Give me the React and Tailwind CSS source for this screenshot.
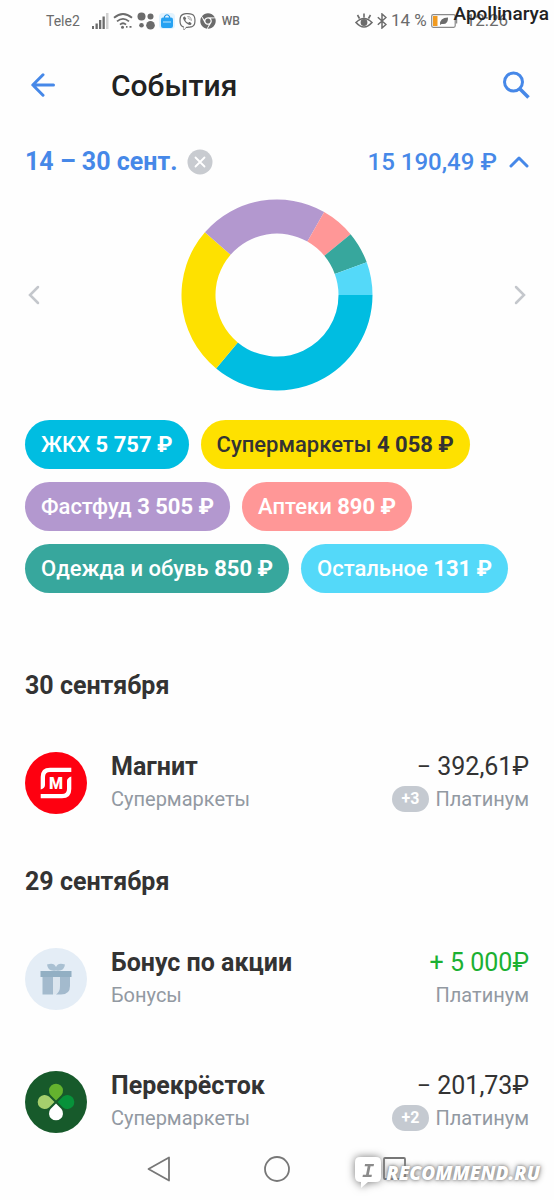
import { FaViber, FaChrome } from "react-icons/fa";

const categories = [
  { name: "ЖКХ", sum: "5 757 ₽", chip: "bg-[#00bde1] text-white", color: "#00bde1", from: 0, to: 129.6 },
  { name: "Супермаркеты", sum: "4 058 ₽", chip: "bg-[#fee100] text-[#333333]", color: "#fee100", from: 129.6, to: 221 },
  { name: "Фастфуд", sum: "3 505 ₽", chip: "bg-[#b398cf] text-white", color: "#b398cf", from: 221, to: 299.6 },
  { name: "Аптеки", sum: "890 ₽", chip: "bg-[#ff9797] text-white", color: "#ff9797", from: 299.6, to: 320.4 },
  { name: "Одежда и обувь", sum: "850 ₽", chip: "bg-[#37a79d] text-white", color: "#37a79d", from: 320.4, to: 340 },
  { name: "Остальное", sum: "131 ₽", chip: "bg-[#54d9f9] text-white", color: "#54d9f9", from: 340, to: 360 },
];

const days = [
  {
    date: "30 сентября",
    items: [
      { title: "Магнит", category: "Супермаркеты", amount: "− 392,61", account: "Платинум", bonus: "+3", Logo: MagnitLogo },
    ],
  },
  {
    date: "29 сентября",
    items: [
      { title: "Бонус по акции", category: "Бонусы", amount: "+ 5 000", account: "Платинум", income: true, Logo: GiftLogo },
      { title: "Перекрёсток", category: "Супермаркеты", amount: "− 201,73", account: "Платинум", bonus: "+2", Logo: CloverLogo },
    ],
  },
];

function MagnitLogo() {
  return (
    <svg viewBox="0 0 62 62" className="size-[62px] shrink-0" aria-hidden="true">
      <circle cx="31" cy="31" r="31" fill="#fe0010" />
      <path d="M46.300 15.700V20H25Q20 20 20 25V33Q20 36 15.700 37.500V25Q15.700 15.700 25 15.700Z" fill="#fff" />
      <path d="M15.700 46.300V42H37Q42 42 42 37V29Q42 26 46.300 24.500V37Q46.300 46.300 37 46.300Z" fill="#fff" />
      <text x="31" y="36.500" textAnchor="middle" fontSize="16" fontWeight="900" fill="#fff" fontFamily="Roboto, sans-serif">
        М
      </text>
    </svg>
  );
}

function GiftLogo() {
  return (
    <svg viewBox="0 0 62 62" className="size-[62px] shrink-0" aria-hidden="true">
      <circle cx="31" cy="31" r="31" fill="#e4edf6" />
      <path d="M17.500 29H28V46.500H17.500Z" fill="#a3bacd" />
      <path d="M28 29H35V39Q35 46.500 28 46.500Z" fill="#dbe5ee" />
      <path d="M35 29H45V38Q45 46.500 36 46.500H31Q35 44 35 38Z" fill="#a3bacd" />
      <path d="M31 22.500Q23 24 22 16.500Q29 14 31 19Q33 14 40 16.500Q39 24 31 22.500Z" fill="#a9c0d2" />
      <rect x="15.500" y="23" width="31" height="6" fill="#92afc3" />
    </svg>
  );
}

function CloverLogo() {
  const petal = "M31 29.500L25.500 24A7 7 0 1 1 36.500 24Z";
  return (
    <svg viewBox="0 0 62 62" className="size-[62px] shrink-0" aria-hidden="true">
      <circle cx="31" cy="31" r="31" fill="#175a2b" />
      <path d={petal} fill="#64b32e" />
      <path d={petal} fill="#07923a" transform="rotate(90 31 31)" />
      <path d={petal} fill="#fff" transform="rotate(180 31 31)" />
      <path d={petal} fill="#a5cf6d" transform="rotate(270 31 31)" />
    </svg>
  );
}

function slicePath({ from, to }) {
  const point = (r, deg) => {
    const a = (deg * Math.PI) / 180;
    return `${96 + r * Math.cos(a)} ${96 + r * Math.sin(a)}`;
  };
  const large = to - from > 180 ? 1 : 0;
  return `M${point(95.5, from)}A95.5 95.5 0 ${large} 1 ${point(95.5, to)}L${point(61.5, to)}A61.5 61.5 0 ${large} 0 ${point(61.5, from)}Z`;
}

function StatusBar() {
  return (
    <div className="relative flex h-[42px] items-center justify-between px-[46px] text-[#6b6b6b]">
      <div className="flex items-center gap-1">
        <span className="mr-2 text-sm">Tele2</span>
        <svg viewBox="0 0 17 16" className="h-4 w-[17px]" fill="currentColor" aria-hidden="true">
          <rect y="13" width="2" height="3" />
          <rect x="3.500" y="10.500" width="2.300" height="5.500" />
          <rect x="7" y="7" width="2.300" height="9" />
          <rect x="10.500" y="3.500" width="2.300" height="12.500" />
          <rect x="14" y="0" width="2.500" height="16" opacity=".3" />
        </svg>
        <svg viewBox="0 0 20 16" className="h-4 w-5" fill="none" stroke="currentColor" strokeWidth="1.800" aria-hidden="true">
          <path d="M1 4.800Q10-2.800 19 4.800M4 8.400Q10 3.400 16 8.400M7 11.600Q10 9 13 11.600" />
          <circle cx="9.500" cy="14.200" r="1.500" fill="currentColor" stroke="none" />
          <path d="M13 13.800h1.500M16.500 13.800h2" />
        </svg>
        <svg viewBox="0 0 18 18" className="size-[18px]" fill="currentColor" aria-hidden="true">
          <circle cx="4.500" cy="4.500" r="4" />
          <circle cx="13.500" cy="4.500" r="3" />
          <circle cx="4.500" cy="13.200" r="2.300" />
          <circle cx="13.500" cy="13.200" r="4.300" />
        </svg>
        <svg viewBox="0 0 16 16" className="size-4" aria-hidden="true">
          <rect width="16" height="16" rx="4" fill="#e2f3fe" />
          <path d="M5.500 5V3.500Q8 0 10.500 3.500V5" fill="none" stroke="#2196e8" strokeWidth="1.200" />
          <rect x="2" y="4.500" width="12" height="10.500" rx="2" fill="#27a2f2" />
          <path d="M4 9h8" stroke="#a8dafb" strokeWidth="1.200" />
        </svg>
        <FaViber className="size-[17px]" />
        <FaChrome className="size-4" />
        <span className="ml-0.5 text-xs font-medium">WB</span>
      </div>
      <div className="flex items-center gap-1 text-[17px]">
        <svg viewBox="0 0 18 16" className="h-4 w-[18px]" fill="none" stroke="currentColor" strokeWidth="1.600" aria-hidden="true">
          <path d="M1 9.500Q9 1.500 17 9.500Q9 18.500 1 9.500ZM9 4.500V.5M4.500 5.500L2.500 2M13.500 5.500L15.500 2" />
          <circle cx="9" cy="9.500" r="2.600" fill="currentColor" />
        </svg>
        <svg viewBox="0 0 10 16" className="h-4 w-[10px]" fill="none" stroke="currentColor" strokeWidth="1.500" aria-hidden="true">
          <path d="M.8 4.200L9 11.500L5 15V1L9 4.500L.8 11.800" />
        </svg>
        <span className="whitespace-nowrap">14 %</span>
        <svg viewBox="0 0 27 14" className="h-[14px] w-[27px]" aria-hidden="true">
          <rect x=".7" y=".7" width="23.500" height="12.600" rx="1.500" fill="none" stroke="#8a8a8a" strokeWidth="1.200" />
          <path d="M25.500 4.500v5" stroke="#8a8a8a" strokeWidth="1.500" />
          <rect x="2" y="2" width="4.500" height="10" fill="#f19a1f" />
          <path d="M9 11Q8.500 3.500 17 3.500Q17.500 11 10.500 10Z" fill="#6b6b6b" />
        </svg>
        <span className="ml-1">12:26</span>
      </div>
      <span className="absolute top-0 right-[5px] text-[19px]/7 font-medium text-[#222222]">Apollinarya</span>
    </div>
  );
}

function Operation({ item }) {
  const { title, category, amount, account, bonus, income, Logo } = item;
  return (
    <li className="flex items-center gap-6">
      <Logo />
      <div className="min-w-0 flex-1">
        <div className="text-[25px]/8 font-bold">{title}</div>
        <div className="text-xl/8 text-[#9299a2]">{category}</div>
      </div>
      <div className="text-right">
        <div className={income ? "text-[25px]/8 text-[#1bb032]" : "text-[25px]/8"}>{amount}₽</div>
        <div className="flex items-center justify-end gap-1.5 text-xl/8 text-[#9299a2]">
          {bonus && (
            <span className="rounded-full bg-[#c5cad1] px-[10px] text-base/[26px] font-bold text-white">{bonus}</span>
          )}
          {account}
        </div>
      </div>
    </li>
  );
}

function Watermark() {
  return (
    <div className="absolute right-[14px] bottom-2.5 flex items-center gap-1">
      <svg viewBox="0 0 28 34" className="h-[34px] w-7 drop-shadow-[0_0_4px_#777777]" aria-hidden="true">
        <path d="M6 1H22Q27 1 27 6V21Q27 26 22 26H14L7 32V26Q1 26 1 21V6Q1 1 6 1Z" fill="#fff" />
        <text x="14" y="21" textAnchor="middle" fontSize="20" fontWeight="700" fontStyle="italic" fill="#8b8b8b" fontFamily="Liberation Mono, monospace">
          I
        </text>
      </svg>
      <span className="font-['Open_Sans',sans-serif] text-[19px]/6 font-extrabold text-white italic [text-shadow:0_0_3px_#777777,0_0_6px_#888888]">
        RECOMMEND.RU
      </span>
    </div>
  );
}

export default function App() {
  return (
    <div className="flex min-h-screen flex-col bg-[#fefefe] font-[Roboto,sans-serif] text-[#333333]">
      <StatusBar />

      <header className="flex h-[86px] items-center px-6 text-[#4688e8]">
        <button type="button" aria-label="Назад" className="w-[87px] pl-[7px]">
          <svg viewBox="0 0 24 24" className="size-6" fill="none" stroke="currentColor" strokeWidth="3" strokeLinecap="round" strokeLinejoin="round">
            <path d="M22.500 12H2M12 1.800L1.800 12L12 22.200" />
          </svg>
        </button>
        <h1 className="flex-1 text-[30px] font-medium text-[#222222]">События</h1>
        <button type="button" aria-label="Поиск">
          <svg viewBox="0 0 28 28" className="size-7" fill="none" stroke="currentColor" strokeWidth="3">
            <circle cx="11.500" cy="11" r="9" />
            <path d="M17.500 17.500L26.500 26.500" strokeWidth="3.500" />
          </svg>
        </button>
      </header>

      <main className="px-[25px]">
        <div className="flex h-[68px] items-center justify-between text-[#4688e8]">
          <div className="flex items-center gap-[10px]">
            <button type="button" className="text-[25px] font-bold">14 – 30 сент.</button>
            <button type="button" aria-label="Сбросить период">
              <svg viewBox="0 0 26 26" className="size-[26px]">
                <circle cx="13" cy="13" r="12.500" fill="#c8cbd0" />
                <path d="M8.500 8.500L17.500 17.500M17.500 8.500L8.500 17.500" stroke="#fff" strokeWidth="1.800" strokeLinecap="round" />
              </svg>
            </button>
          </div>
          <button type="button" className="flex items-center gap-3 text-2xl font-medium">
            <span>15 190,49&#8197;₽</span>
            <svg viewBox="0 0 20 12" className="h-3 w-5" fill="none" stroke="currentColor" strokeWidth="3" strokeLinecap="round" strokeLinejoin="round" aria-hidden="true">
              <path d="M2 10L10 2L18 10" />
            </svg>
          </button>
        </div>

        <section className="flex h-[198px] items-center justify-between text-[#c4c7cc]">
          <button type="button" aria-label="Предыдущий период" className="px-[3px]">
            <svg viewBox="0 0 12 20" className="h-5 w-3" fill="none" stroke="currentColor" strokeWidth="2.500" strokeLinecap="round">
              <path d="M10 2L2 10L10 18" />
            </svg>
          </button>
          <svg viewBox="0 0 192 192" className="size-48" role="img" aria-label="Расходы по категориям">
            {categories.map((c) => (
              <path key={c.name} d={slicePath(c)} fill={c.color} />
            ))}
          </svg>
          <button type="button" aria-label="Следующий период" className="px-[3px]">
            <svg viewBox="0 0 12 20" className="h-5 w-3" fill="none" stroke="currentColor" strokeWidth="2.500" strokeLinecap="round">
              <path d="M2 2L10 10L2 18" />
            </svg>
          </button>
        </section>

        <div className="mt-[26px] flex flex-wrap gap-x-3 gap-y-[13px]">
          {categories.map((c) => (
            <button key={c.name} type="button" className={`rounded-full px-4 text-[22px]/[49px] font-medium ${c.chip}`}>
              {c.name} <b className="font-bold">{c.sum}</b>
            </button>
          ))}
        </div>

        <div className="mt-[77px] flex flex-col gap-[51px]">
          {days.map((day) => (
            <section key={day.date}>
              <h2 className="text-[25px]/8 font-bold">{day.date}</h2>
              <ul className="mt-[49px] flex flex-col gap-[59px]">
                {day.items.map((item) => (
                  <Operation key={item.title} item={item} />
                ))}
              </ul>
            </section>
          ))}
        </div>
      </main>

      <nav className="relative mt-auto flex h-[62px] items-center justify-between px-[146px] text-[#777777]">
        <button type="button" aria-label="Назад">
          <svg viewBox="0 0 26 28" className="h-7 w-[26px]" fill="none" stroke="currentColor" strokeWidth="1.800" strokeLinejoin="round">
            <path d="M23 2.500V25.500L2.500 14Z" />
          </svg>
        </button>
        <button type="button" aria-label="Домой">
          <svg viewBox="0 0 28 28" className="size-7" fill="none" stroke="currentColor" strokeWidth="1.800">
            <circle cx="14" cy="14" r="12" />
          </svg>
        </button>
        <button type="button" aria-label="Недавние">
          <svg viewBox="0 0 26 26" className="size-[26px]" fill="none" stroke="currentColor" strokeWidth="1.800">
            <rect x="2" y="2" width="21" height="21" rx="1" />
          </svg>
        </button>
        <Watermark />
      </nav>
    </div>
  );
}
